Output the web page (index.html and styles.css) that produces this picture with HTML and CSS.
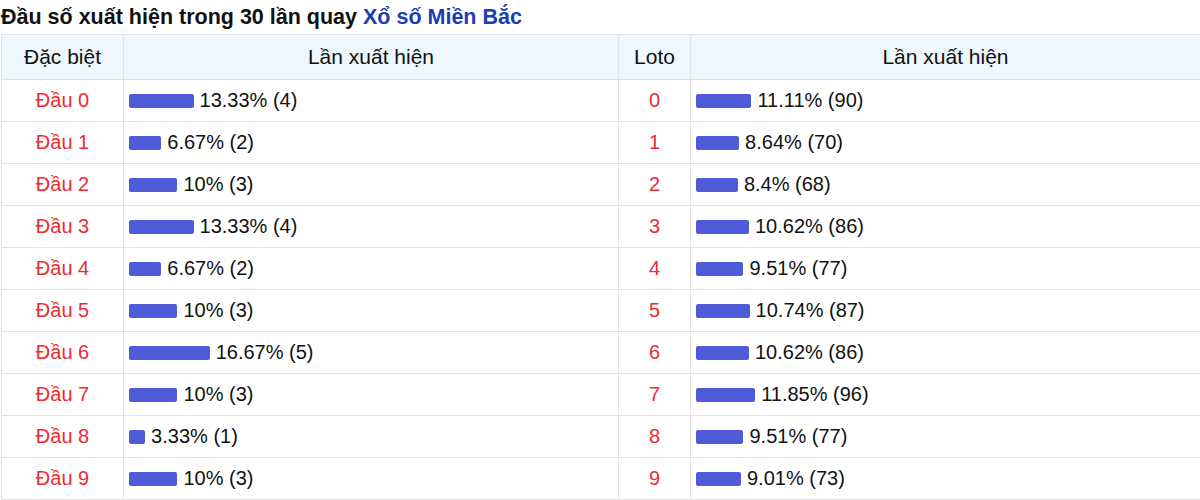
FILE: index.html
```html
<!DOCTYPE html>
<html lang="vi">
<head>
<meta charset="utf-8">
<title>Đầu số xuất hiện</title>
<link rel="stylesheet" href="styles.css">
</head>
<body>
<div class="wrap">
  <h2 class="title">Đầu số xuất hiện trong 30 lần quay <a class="title-link" href="#">Xổ số Miền Bắc</a></h2>
  <table class="stats">
    <colgroup>
      <col class="c1"><col class="c2"><col class="c3"><col class="c4">
    </colgroup>
    <thead>
      <tr><th>Đặc biệt</th><th>Lần xuất hiện</th><th>Loto</th><th>Lần xuất hiện</th></tr>
    </thead>
    <tbody>
      <tr><td class="num">Đầu 0</td><td><div class="cell"><span class="bar" style="width:13.33%"></span><span>13.33% (4)</span></div></td><td class="num">0</td><td><div class="cell"><span class="bar" style="width:11.11%"></span><span>11.11% (90)</span></div></td></tr>
      <tr><td class="num">Đầu 1</td><td><div class="cell"><span class="bar" style="width:6.67%"></span><span>6.67% (2)</span></div></td><td class="num">1</td><td><div class="cell"><span class="bar" style="width:8.64%"></span><span>8.64% (70)</span></div></td></tr>
      <tr><td class="num">Đầu 2</td><td><div class="cell"><span class="bar" style="width:10%"></span><span>10% (3)</span></div></td><td class="num">2</td><td><div class="cell"><span class="bar" style="width:8.4%"></span><span>8.4% (68)</span></div></td></tr>
      <tr><td class="num">Đầu 3</td><td><div class="cell"><span class="bar" style="width:13.33%"></span><span>13.33% (4)</span></div></td><td class="num">3</td><td><div class="cell"><span class="bar" style="width:10.62%"></span><span>10.62% (86)</span></div></td></tr>
      <tr><td class="num">Đầu 4</td><td><div class="cell"><span class="bar" style="width:6.67%"></span><span>6.67% (2)</span></div></td><td class="num">4</td><td><div class="cell"><span class="bar" style="width:9.51%"></span><span>9.51% (77)</span></div></td></tr>
      <tr><td class="num">Đầu 5</td><td><div class="cell"><span class="bar" style="width:10%"></span><span>10% (3)</span></div></td><td class="num">5</td><td><div class="cell"><span class="bar" style="width:10.74%"></span><span>10.74% (87)</span></div></td></tr>
      <tr><td class="num">Đầu 6</td><td><div class="cell"><span class="bar" style="width:16.67%"></span><span>16.67% (5)</span></div></td><td class="num">6</td><td><div class="cell"><span class="bar" style="width:10.62%"></span><span>10.62% (86)</span></div></td></tr>
      <tr><td class="num">Đầu 7</td><td><div class="cell"><span class="bar" style="width:10%"></span><span>10% (3)</span></div></td><td class="num">7</td><td><div class="cell"><span class="bar" style="width:11.85%"></span><span>11.85% (96)</span></div></td></tr>
      <tr><td class="num">Đầu 8</td><td><div class="cell"><span class="bar" style="width:3.33%"></span><span>3.33% (1)</span></div></td><td class="num">8</td><td><div class="cell"><span class="bar" style="width:9.51%"></span><span>9.51% (77)</span></div></td></tr>
      <tr><td class="num">Đầu 9</td><td><div class="cell"><span class="bar" style="width:10%"></span><span>10% (3)</span></div></td><td class="num">9</td><td><div class="cell"><span class="bar" style="width:9.01%"></span><span>9.01% (73)</span></div></td></tr>
    </tbody>
  </table>
</div>
</body>
</html>
```
FILE: styles.css
```css
html, body {
  margin: 0;
  padding: 0;
  background: #fff;
}
body {
  font-family: "Liberation Sans", Arial, sans-serif;
  color: #111;
}
.wrap {
  padding: 0 0 0 1px;
}
.title {
  margin: 0;
  padding: 5px 0 0 0;
  height: 29px;
  font-size: 21.5px;
  font-weight: 700;
  line-height: 24px;
  color: #111;
}
.title-link {
  color: #1d3db3;
  text-decoration: none;
}
.stats {
  width: 1199px;
  border-collapse: collapse;
  table-layout: fixed;
  font-size: 20px;
}
.c1 { width: 122px; }
.c2 { width: 495px; }
.c3 { width: 72px; }
.c4 { width: 510px; }
.stats th,
.stats td {
  border: 1px solid #e2e2e2;
  padding: 0 5px;
}
.stats th {
  height: 44px;
  background: #eef6fe;
  font-weight: 400;
  font-size: 21px;
  text-align: center;
  color: #111;
}
.stats td {
  height: 41px;
}
.stats td.num {
  text-align: center;
  color: #ec2b33;
}
.cell {
  display: flex;
  align-items: center;
  gap: 6px;
}
.bar {
  display: block;
  height: 14px;
  background: #4f5bd9;
  border-radius: 2px;
  flex: none;
}
```
